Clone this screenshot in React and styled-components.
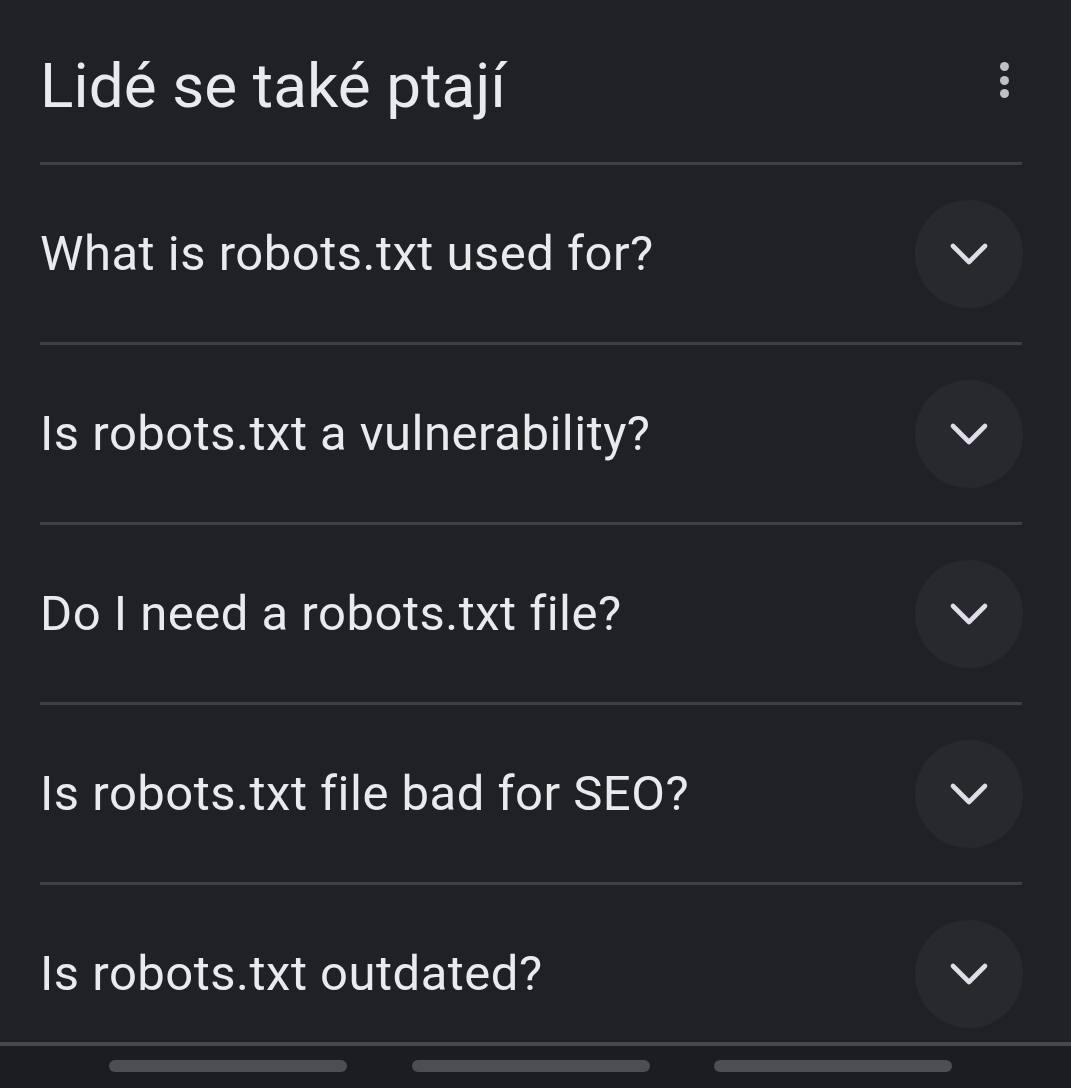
import React from 'react';
import styled, { createGlobalStyle } from 'styled-components';

const GlobalStyle = createGlobalStyle`
  html, body {
    margin: 0;
    padding: 0;
    background: #202124;
  }
  body {
    font-family: 'Roboto', 'Open Sans', sans-serif;
    -webkit-font-smoothing: antialiased;
  }
`;

const Screen = styled.div`
  height: 1088px;
  display: grid;
  grid-template-rows: 1fr 46px;
  background: #202124;
  overflow: hidden;
`;

const Content = styled.div`
  overflow: hidden;
  padding: 0 49px 0 40px;
`;

const Header = styled.div`
  height: 165px;
  display: flex;
  align-items: flex-start;
  justify-content: space-between;
  border-bottom: 3px solid #3c4043;
  box-sizing: border-box;
  padding-top: 50px;
`;

const Title = styled.h2`
  margin: 0;
  font-size: 62px;
  line-height: 72px;
  font-weight: 400;
  color: #e8eaed;
  letter-spacing: 0.1px;
`;

const MoreButton = styled.div`
  display: flex;
  flex-direction: column;
  gap: 4.5px;
  margin-right: 13px;
  margin-top: 12px;
`;

const Dot = styled.span`
  width: 9px;
  height: 9px;
  border-radius: 50%;
  background: #bdc1c6;
`;

const Row = styled.div`
  height: 180px;
  display: flex;
  align-items: center;
  justify-content: space-between;
  border-bottom: 3px solid #3c4043;
  box-sizing: border-box;
`;

const Question = styled.span`
  font-size: 49px;
  color: #e8eaed;
  letter-spacing: 0.5px;
`;

const ExpandCircle = styled.div`
  width: 108px;
  height: 108px;
  border-radius: 50%;
  background: #28292c;
  display: flex;
  align-items: center;
  justify-content: center;
  flex-shrink: 0;
  margin-right: -1px;
`;

const NavBar = styled.div`
  border-top: 4px solid #46484c;
  background: #1c1d20;
  display: flex;
  justify-content: flex-start;
  gap: 64.5px;
  padding: 14px 0 0 109px;
  box-sizing: border-box;
`;

const Pill = styled.span`
  width: 238px;
  height: 12px;
  border-radius: 6px;
  background: #4d4e52;
`;

// expand_more chevron
const Chevron = () => (
  <svg width="40" height="26" viewBox="0 0 40 26" fill="none">
    <path d="M4 5 L20 21 L36 5" stroke="#dedde8" strokeWidth="4.6" strokeLinecap="round" strokeLinejoin="round" />
  </svg>
);

const questions = [
  'What is robots.txt used for?',
  'Is robots.txt a vulnerability?',
  'Do I need a robots.txt file?',
  'Is robots.txt file bad for SEO?',
  'Is robots.txt outdated?',
];

export default function App() {
  return (
    <>
      <GlobalStyle />
      <Screen>
        <Content>
          <Header>
            <Title>Lidé se také ptají</Title>
            <MoreButton>
              <Dot />
              <Dot />
              <Dot />
            </MoreButton>
          </Header>
          {questions.map((q) => (
            <Row key={q}>
              <Question>{q}</Question>
              <ExpandCircle>
                <Chevron />
              </ExpandCircle>
            </Row>
          ))}
        </Content>
        <NavBar>
          <Pill />
          <Pill />
          <Pill />
        </NavBar>
      </Screen>
    </>
  );
}
